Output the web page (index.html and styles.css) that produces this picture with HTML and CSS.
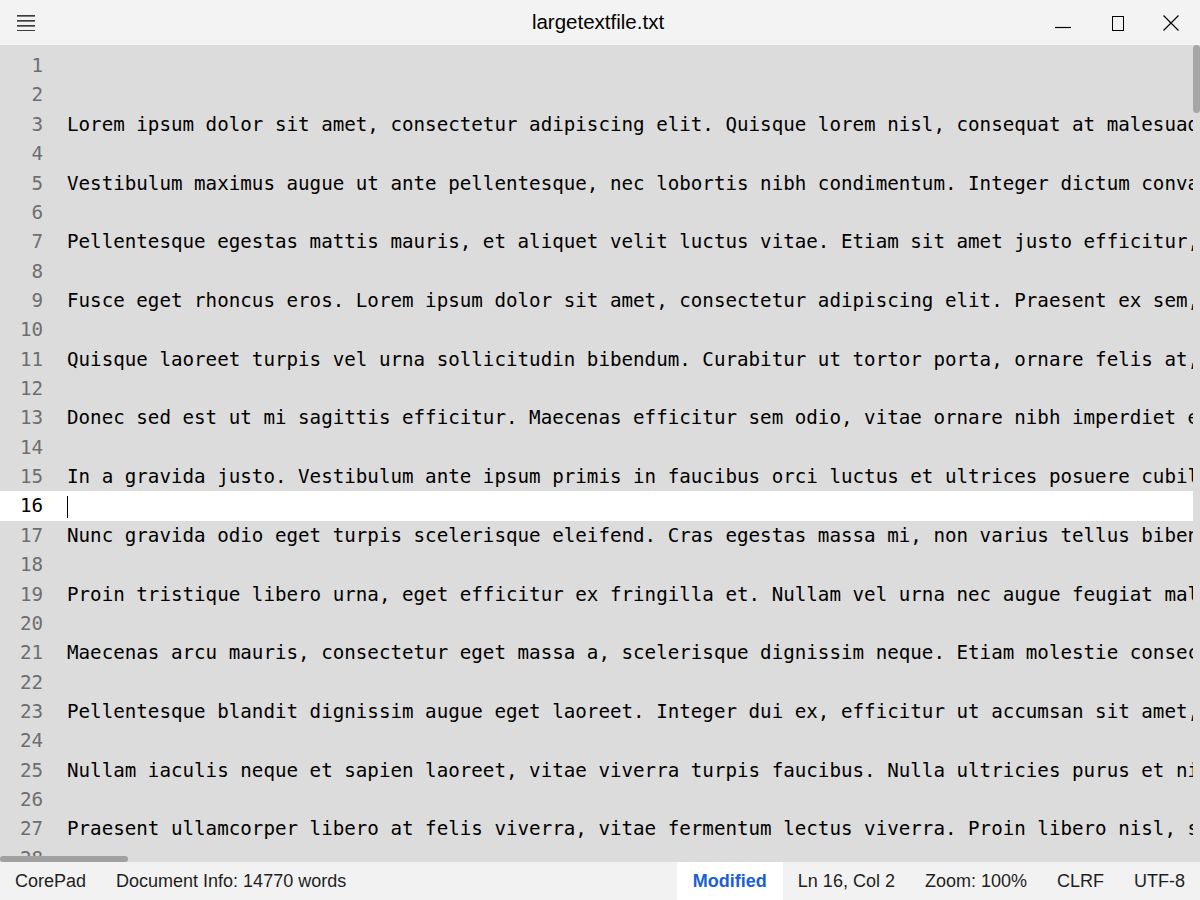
FILE: index.html
```html
<!DOCTYPE html>
<html lang="en">
<head>
<meta charset="utf-8">
<title>largetextfile.txt - CorePad</title>
<link rel="stylesheet" href="styles.css">
</head>
<body>
<div class="app">
  <header class="titlebar">
    <div class="menu-btn">
      <svg width="18" height="16" viewBox="0 0 18 16"><path d="M0 1.5H18M0 6.5H18M0 11.5H18M0 16.5H18" stroke="#000" stroke-width="1.2" fill="none" transform="translate(0 -0.7)"/></svg>
    </div>
    <div class="title">largetextfile.txt</div>
    <div class="win-controls">
      <div class="win-btn"><svg width="16" height="16" viewBox="0 0 16 16"><path d="M0 12.5H16" stroke="#000" stroke-width="1.2"/></svg></div>
      <div class="win-btn"><svg width="12" height="15" viewBox="0 0 12 15"><rect x="0.5" y="0.5" width="11" height="14" stroke="#000" stroke-width="1" fill="none"/></svg></div>
      <div class="win-btn"><svg width="16" height="16" viewBox="0 0 16 16"><path d="M0.5 0.5L15.5 15.5M15.5 0.5L0.5 15.5" stroke="#000" stroke-width="1.2"/></svg></div>
    </div>
  </header>
  <main class="editor">
    <div class="content">
      <div class="line"><span class="num">1</span><span class="txt"></span></div>
      <div class="line"><span class="num">2</span><span class="txt"></span></div>
      <div class="line"><span class="num">3</span><span class="txt">Lorem ipsum dolor sit amet, consectetur adipiscing elit. Quisque lorem nisl, consequat at malesuada sed, tincidunt vel nunc.</span></div>
      <div class="line"><span class="num">4</span><span class="txt"></span></div>
      <div class="line"><span class="num">5</span><span class="txt">Vestibulum maximus augue ut ante pellentesque, nec lobortis nibh condimentum. Integer dictum convallis nibh.</span></div>
      <div class="line"><span class="num">6</span><span class="txt"></span></div>
      <div class="line"><span class="num">7</span><span class="txt">Pellentesque egestas mattis mauris, et aliquet velit luctus vitae. Etiam sit amet justo efficitur, dictum elit.</span></div>
      <div class="line"><span class="num">8</span><span class="txt"></span></div>
      <div class="line"><span class="num">9</span><span class="txt">Fusce eget rhoncus eros. Lorem ipsum dolor sit amet, consectetur adipiscing elit. Praesent ex sem, luctus at.</span></div>
      <div class="line"><span class="num">10</span><span class="txt"></span></div>
      <div class="line"><span class="num">11</span><span class="txt">Quisque laoreet turpis vel urna sollicitudin bibendum. Curabitur ut tortor porta, ornare felis at, semper odio.</span></div>
      <div class="line"><span class="num">12</span><span class="txt"></span></div>
      <div class="line"><span class="num">13</span><span class="txt">Donec sed est ut mi sagittis efficitur. Maecenas efficitur sem odio, vitae ornare nibh imperdiet eu. Nam vel.</span></div>
      <div class="line"><span class="num">14</span><span class="txt"></span></div>
      <div class="line"><span class="num">15</span><span class="txt">In a gravida justo. Vestibulum ante ipsum primis in faucibus orci luctus et ultrices posuere cubilia curae.</span></div>
      <div class="line current"><span class="num">16</span><span class="txt"><span class="caret"></span></span></div>
      <div class="line"><span class="num">17</span><span class="txt">Nunc gravida odio eget turpis scelerisque eleifend. Cras egestas massa mi, non varius tellus bibendum eget.</span></div>
      <div class="line"><span class="num">18</span><span class="txt"></span></div>
      <div class="line"><span class="num">19</span><span class="txt">Proin tristique libero urna, eget efficitur ex fringilla et. Nullam vel urna nec augue feugiat malesuada.</span></div>
      <div class="line"><span class="num">20</span><span class="txt"></span></div>
      <div class="line"><span class="num">21</span><span class="txt">Maecenas arcu mauris, consectetur eget massa a, scelerisque dignissim neque. Etiam molestie consectetur.</span></div>
      <div class="line"><span class="num">22</span><span class="txt"></span></div>
      <div class="line"><span class="num">23</span><span class="txt">Pellentesque blandit dignissim augue eget laoreet. Integer dui ex, efficitur ut accumsan sit amet, porta nec.</span></div>
      <div class="line"><span class="num">24</span><span class="txt"></span></div>
      <div class="line"><span class="num">25</span><span class="txt">Nullam iaculis neque et sapien laoreet, vitae viverra turpis faucibus. Nulla ultricies purus et nisi tempus.</span></div>
      <div class="line"><span class="num">26</span><span class="txt"></span></div>
      <div class="line"><span class="num">27</span><span class="txt">Praesent ullamcorper libero at felis viverra, vitae fermentum lectus viverra. Proin libero nisl, sed luctus.</span></div>
      <div class="line"><span class="num">28</span><span class="txt"></span></div>
    </div>
    <div class="vscroll"><div class="vthumb"></div></div>
    <div class="hthumb"></div>
  </main>
  <footer class="statusbar">
    <div class="item">CorePad</div>
    <div class="item">Document Info: 14770 words</div>
    <div class="spacer"></div>
    <div class="item modified">Modified</div>
    <div class="item">Ln 16, Col 2</div>
    <div class="item">Zoom: 100%</div>
    <div class="item">CLRF</div>
    <div class="item">UTF-8</div>
  </footer>
</div>
</body>
</html>
```

FILE: styles.css
```css
* { box-sizing: border-box; }
html, body {
  margin: 0;
  padding: 0;
  width: 1200px;
  height: 900px;
  overflow: hidden;
}
body {
  font-family: "Liberation Sans", Arial, sans-serif;
  color: #000;
}
.app {
  display: flex;
  flex-direction: column;
  height: 900px;
}
.titlebar {
  height: 45px;
  flex: 0 0 45px;
  background: #f3f3f3;
  display: grid;
  grid-template-columns: 1fr auto 1fr;
  align-items: center;
}
.menu-btn {
  justify-self: start;
  height: 45px;
  display: flex;
  align-items: center;
  padding-left: 17px;
  padding-top: 1px;
}
.menu-btn svg { display: block; }
.title {
  text-align: center;
  font-size: 20.5px;
  padding-right: 4px;
  padding-bottom: 1px;
  white-space: nowrap;
}
.win-controls {
  justify-self: end;
  display: flex;
  height: 45px;
}
.win-btn {
  height: 45px;
  display: flex;
  align-items: center;
  justify-content: center;
}
.win-btn svg { display: block; }
.win-btn:nth-child(1) { width: 58px; padding-top: 1px; }
.win-btn:nth-child(2) { width: 52px; padding-top: 1px; }
.win-btn:nth-child(3) { width: 56px; padding-top: 1px; padding-right: 3px; }

.editor {
  flex: 1;
  background: #dcdcdc;
  display: flex;
  overflow: hidden;
  position: relative;
}
.content {
  flex: 1;
  padding-top: 6.1px;
  overflow: hidden;
  font-family: "DejaVu Sans Mono", "Liberation Mono", monospace;
  font-size: 19.2px;
}
.line {
  display: flex;
  height: 29.37px;
  line-height: 29.37px;
  white-space: pre;
}
.line.current { background: #ffffff; }
.num {
  flex: 0 0 43px;
  text-align: right;
  color: #6e6e6e;
}
.line.current .num { color: #000; }
.txt {
  flex: 1;
  padding-left: 24px;
  overflow: hidden;
  color: #000;
  display: flex;
  align-items: center;
}
.caret {
  display: block;
  width: 1px;
  height: 22px;
  background: #000;
  margin-top: 1px;
}
.vscroll {
  flex: 0 0 7px;
}
.vthumb {
  width: 7px;
  height: 68px;
  background: #a6a6a6;
  border-radius: 4px;
}
.hthumb {
  position: absolute;
  left: 0;
  bottom: 0;
  width: 128px;
  height: 6px;
  background: #a0a0a0;
  border-radius: 3px;
}
.statusbar {
  height: 38px;
  flex: 0 0 38px;
  background: #f2f2f2;
  display: flex;
  align-items: stretch;
  font-size: 18px;
  line-height: 22px;
  color: #1e1e1e;
}
.item {
  padding: 0 15px;
  display: flex;
  align-items: center;
  white-space: nowrap;
}
.spacer { flex: 1; }
.item.modified {
  background: #ffffff;
  color: #1a5fd8;
  font-weight: bold;
  padding: 0 16px;
}
```
